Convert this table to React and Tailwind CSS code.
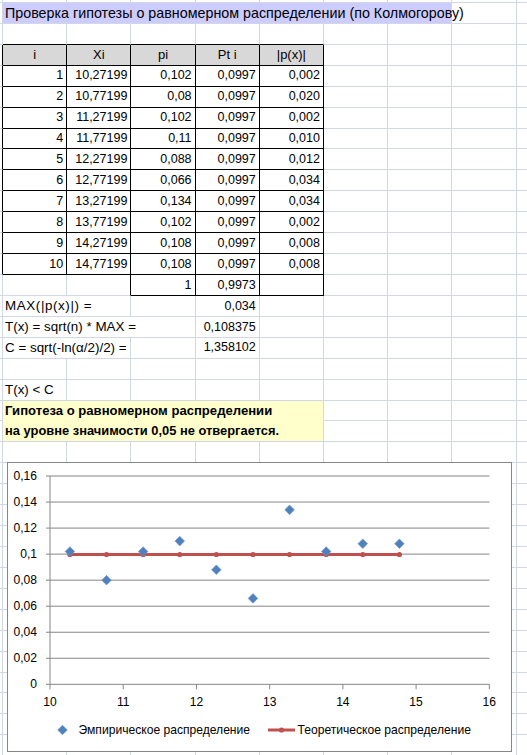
import React from "react";

// Excel-like sheet: 64.2px columns, ~21px rows
const W = {
  1: "w-[64.2px]",
  2: "w-[128.4px]",
  3: "w-[192.6px]",
  5: "w-[321px]",
  7: "w-[449.4px]",
};

const GRID = "border-r-[#d0d7e5] border-b-[#d0d7e5]";
const BOX = "border-r-black border-b-black";

const data = [
  ["1", "10,27199", "0,102", "0,0997", "0,002"],
  ["2", "10,77199", "0,08", "0,0997", "0,020"],
  ["3", "11,27199", "0,102", "0,0997", "0,002"],
  ["4", "11,77199", "0,11", "0,0997", "0,010"],
  ["5", "12,27199", "0,088", "0,0997", "0,012"],
  ["6", "12,77199", "0,066", "0,0997", "0,034"],
  ["7", "13,27199", "0,134", "0,0997", "0,034"],
  ["8", "13,77199", "0,102", "0,0997", "0,002"],
  ["9", "14,27199", "0,108", "0,0997", "0,008"],
  ["10", "14,77199", "0,108", "0,0997", "0,008"],
];

// each row: { gutter: border class for the 3px gutter, cells: [...] }
// a cell: { s: span, t: text, a: "l" | "r" | "c", cls: extra classes }
function buildRows() {
  const rows = [];
  rows.push({
    gutter: GRID,
    cells: [{ s: 7, t: "Проверка гипотезы о равномерном распределении (по Колмогорову)", cls: "text-[14.3px] bg-[#ccccff] " + GRID }],
  });
  rows.push({ gutter: GRID, cells: [1, 2, 3, 4, 5].map(() => ({ cls: "border-r-[#d0d7e5] border-b-black" })) });
  rows.push({
    gutter: "border-r-black border-b-[#d0d7e5]",
    cells: ["i", "Xi", "pi", "Pt i", "|p(x)|"].map((t) => ({ t, a: "c", cls: "text-[13px] bg-[#d8d8d8] " + BOX })),
  });
  data.forEach((r) => {
    rows.push({
      gutter: "border-r-black border-b-[#d0d7e5]",
      cells: r.map((t) => ({ t, a: "r", cls: BOX })),
    });
  });
  rows.push({
    gutter: GRID,
    cells: [
      { cls: GRID },
      { cls: "border-r-black border-b-[#d0d7e5]" },
      { t: "1", a: "r", cls: BOX },
      { t: "0,9973", a: "r", cls: BOX },
      { cls: BOX },
    ],
  });
  rows.push({ gutter: GRID, cells: [{ s: 2, t: "MAX(|p(x)|) =", cls: "text-[13.4px] tracking-[0.6px] " + GRID }, {}, { t: "0,034", a: "r" }] });
  rows.push({ gutter: GRID, cells: [{ s: 3, t: "T(x) = sqrt(n) * MAX =", cls: "text-[13.4px] " + GRID }, { t: "0,108375", a: "r" }] });
  rows.push({ gutter: GRID, cells: [{ s: 2, t: "C = sqrt(-ln(α/2)/2) =", cls: "text-[13.4px] " + GRID }, {}, { t: "1,358102", a: "r" }] });
  rows.push({ gutter: GRID, cells: [] });
  rows.push({ gutter: GRID, cells: [{ t: "T(x) < C", cls: "text-[13.4px] " + GRID }] });
  rows.push({
    gutter: GRID,
    cells: [{ s: 5, t: "Гипотеза о равномерном распределении", cls: "text-[13.1px] bg-[#ffffcc] font-bold border-r-[#d0d7e5] border-b-[#ffffcc]" }],
  });
  rows.push({
    gutter: GRID,
    cells: [{ s: 5, t: "на уровне значимости 0,05 не отвергается.", cls: "text-[12.9px] bg-[#ffffcc] font-bold " + GRID }],
  });
  while (rows.length < 36) rows.push({ gutter: GRID, cells: [] });
  return rows;
}

function Row({ row }) {
  const cells = [];
  let used = 0;
  row.cells.forEach((c, i) => {
    const s = c.s || 1;
    used += s;
    const align = c.a === "r" ? "justify-end pr-[3px]" : c.a === "c" ? "justify-center" : "justify-start pl-[2px]";
    cells.push(
      <div
        key={i}
        className={`${W[s]} shrink-0 h-full border-r border-b flex items-center whitespace-nowrap ${align} ${c.cls || GRID}`}
      >
        {c.t}
      </div>
    );
  });
  for (let k = used; k < 9; k++) {
    cells.push(<div key={"e" + k} className={`${W[1]} shrink-0 h-full border-r border-b ${GRID}`} />);
  }
  return (
    <div className="flex h-[20.93px]">
      <div className={`w-[3px] shrink-0 h-full border-r border-b ${row.gutter}`} />
      {cells}
    </div>
  );
}

const emp = [0.102, 0.08, 0.102, 0.11, 0.088, 0.066, 0.134, 0.102, 0.108, 0.108];
const X = (v) => 50 + (v - 10) * 73.22;
const Y = (v) => 476 + ((0.16 - v) / 0.02) * 26.04;

function Chart() {
  const xs = emp.map((_, k) => 10.27199 + 0.5 * k);
  const yTicks = [0, 0.02, 0.04, 0.06, 0.08, 0.1, 0.12, 0.14, 0.16];
  const yLabels = ["0", "0,02", "0,04", "0,06", "0,08", "0,1", "0,12", "0,14", "0,16"];
  const diamond = (x, y, k) => (
    <polygon key={k} points={`${x},${y - 4.8} ${x + 4.8},${y} ${x},${y + 4.8} ${x - 4.8},${y}`} fill="#4f81bd" stroke="#6a95c9" strokeWidth="0.6" />
  );
  return (
    <div className="absolute left-[7px] top-[462px] w-[505px] h-[290px] border border-[#868686] bg-white">
      <svg width="503" height="288" className="block">
        <g transform="translate(-8,-463)" fontFamily="'Liberation Sans', Arial, sans-serif" fontSize="12.1" fill="#000">
          {yTicks.map((v, i) => (
            <g key={i}>
              <line x1="46" x2="489.5" y1={Y(v)} y2={Y(v)} stroke="#868686" strokeWidth="1" />
              <text x="37" y={Y(v) + 4} textAnchor="end">{yLabels[i]}</text>
            </g>
          ))}
          <line x1="50" x2="50" y1={Y(0.16)} y2={Y(0) + 0.5} stroke="#868686" strokeWidth="1" />
          {[10, 11, 12, 13, 14, 15, 16].map((v) => (
            <g key={v}>
              <line x1={X(v)} x2={X(v)} y1={Y(0)} y2={Y(0) + 5} stroke="#868686" strokeWidth="1" />
              <text x={X(v)} y="706" textAnchor="middle">{v}</text>
            </g>
          ))}
          <line x1={X(xs[0])} x2={X(xs[9])} y1={Y(0.0997)} y2={Y(0.0997)} stroke="#c0504d" strokeWidth="3" />
          {xs.map((x, k) => (
            <circle key={k} cx={X(x)} cy={Y(0.0997)} r="2.6" fill="#c0504d" />
          ))}
          {xs.map((x, k) => diamond(X(x), Y(emp[k]), k))}
          {diamond(62.5, 730, "l")}
          <text x="78.5" y="734">Эмпирическое распределение</text>
          <line x1="268" x2="295" y1="730" y2="730" stroke="#c0504d" strokeWidth="3" />
          <circle cx="281.5" cy="730" r="2.6" fill="#c0504d" />
          <text x="297.5" y="734">Теоретическое распределение</text>
        </g>
      </svg>
    </div>
  );
}

export default function App() {
  const rows = buildRows();
  return (
    <div className="relative w-[527px] h-[755px] overflow-hidden bg-white text-black font-['Liberation_Sans',Arial,sans-serif] text-[12.5px] leading-none">
      <div className="h-[3px] flex">
        <div className="w-[3px] shrink-0 border-r border-b border-r-[#d0d7e5] border-b-[#d0d7e5]" />
        {Array.from({ length: 9 }).map((_, i) => (
          <div key={i} className="w-[64.2px] shrink-0 border-r border-b border-r-[#d0d7e5] border-b-[#d0d7e5]" />
        ))}
      </div>
      {rows.map((r, i) => (
        <Row key={i} row={r} />
      ))}
      <Chart />
    </div>
  );
}
